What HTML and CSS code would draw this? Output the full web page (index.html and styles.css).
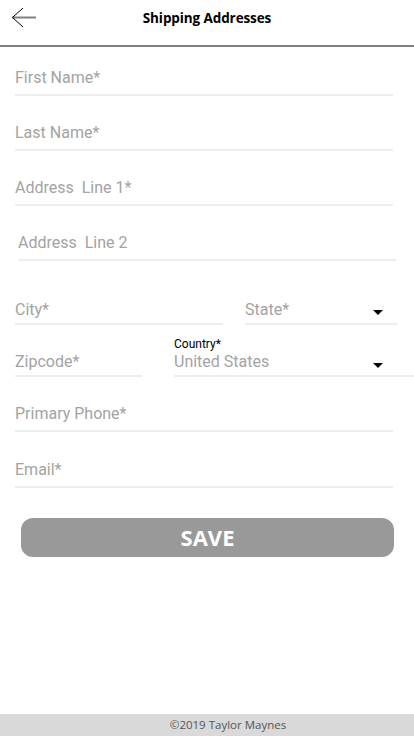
FILE: index.html
```html
<!DOCTYPE html>
<html lang="en">
<head>
<meta charset="utf-8">
<title>Shipping Addresses</title>
<link rel="stylesheet" href="styles.css">
</head>
<body>
<div class="page">
  <header class="header">
    <button class="back" aria-label="Back">
      <svg width="26" height="22" viewBox="0 0 26 22">
        <path d="M1 10.5 H25" stroke="#808080" stroke-width="2" fill="none"/>
        <path d="M12 1 L1.5 10.5 L12 20" stroke="#000" stroke-width="1" fill="none"/>
      </svg>
    </button>
    <h1 class="title">Shipping Addresses</h1>
    <span class="spacer"></span>
  </header>

  <main class="form">
    <div class="field first"><span class="ph">First Name*</span></div>
    <div class="field"><span class="ph">Last Name*</span></div>
    <div class="field"><span class="ph">Address&nbsp; Line 1*</span></div>
    <div class="field shifted"><span class="ph">Address&nbsp; Line 2</span></div>

    <div class="row row-city">
      <div class="field tight city"><span class="ph">City*</span></div>
      <div class="field tight state"><span class="ph">State*</span><span class="caret"></span></div>
    </div>

    <div class="row row-zip">
      <div class="field tight zip"><span class="ph">Zipcode*</span></div>
      <div class="field tight country">
        <div class="stack">
          <span class="label">Country*</span>
          <span class="ph">United States</span>
        </div>
        <span class="caret"></span>
      </div>
    </div>

    <div class="field phone"><span class="ph">Primary Phone*</span></div>
    <div class="field email"><span class="ph">Email*</span></div>

    <button class="save">SAVE</button>
  </main>

  <footer class="footer">©2019 Taylor Maynes</footer>
</div>
</body>
</html>
```

FILE: styles.css
```css
* { box-sizing: border-box; }
html, body { margin: 0; padding: 0; }
body {
  font-family: Roboto, "Noto Sans", sans-serif;
  background: #fff;
  width: 414px;
}
.page {
  min-height: 736px;
  display: flex;
  flex-direction: column;
}
.header {
  height: 47px;
  border-bottom: 2px solid #808080;
  display: grid;
  grid-template-columns: 1fr auto 1fr;
  align-items: center;
  padding-bottom: 10px;
}
.back {
  justify-self: start;
  margin-left: 11px;
  padding: 0;
  border: 0;
  background: none;
  width: 26px;
  height: 22px;
  display: flex;
}
.title {
  margin: 0;
  font-family: "Open Sans", "Noto Sans", sans-serif;
  font-weight: 700;
  font-size: 13.5px;
  color: #000;
  letter-spacing: -0.1px;
}
.form {
  flex: 1;
  display: flex;
  flex-direction: column;
  padding: 0 0 0 15px;
}
.field {
  display: flex;
  align-items: flex-end;
  width: 378px;
  border-bottom: 2px solid #eeeeee;
  padding-top: 2px;
  padding-bottom: 7px;
  margin-top: 25px;
}
.field.first { margin-top: 19px; }
.field.shifted { margin-left: 3px; }
.ph {
  font-size: 16px;
  line-height: 19px;
  color: #a3a3a3;
  font-weight: 400;
}
.row {
  display: flex;
  align-items: flex-end;
}
.row-city { margin-top: 38px; }
.row-zip { margin-top: 11px; }
.row .field { margin-top: 0; }
.field.tight { padding-top: 1px; padding-bottom: 4px; }
.city { width: 208px; }
.state { width: 153px; margin-left: 22px; justify-content: space-between; }
.zip { width: 127px; }
.country { width: 240px; margin-left: 32px; justify-content: space-between; padding-top: 0; }
.stack {
  display: flex;
  flex-direction: column;
}
.label {
  font-size: 12px;
  line-height: 14px;
  color: #000;
  margin-bottom: 1px;
}
.caret {
  width: 0;
  height: 0;
  border-left: 5.5px solid transparent;
  border-right: 5.5px solid transparent;
  border-top: 5px solid #000;
  margin-bottom: 4px;
}
.state .caret { margin-right: 15px; }
.country .caret { margin-right: 31px; margin-bottom: 3px; }
.field.phone { margin-top: 25px; }
.field.email { margin-top: 26px; }
.save {
  margin: 30px 0 0 6px;
  width: 373px;
  height: 39px;
  border: 0;
  border-radius: 12px;
  background: #999999;
  color: #fff;
  font-family: "Open Sans", "Noto Sans", sans-serif;
  font-weight: 700;
  font-size: 22px;
  line-height: 39px;
  padding: 0;
}
.footer {
  height: 22px;
  background: #d9d9d9;
  color: #555;
  font-family: "Open Sans", "Noto Sans", sans-serif;
  font-size: 11.5px;
  line-height: 22px;
  text-align: center;
  padding-left: 42px;
}
```
